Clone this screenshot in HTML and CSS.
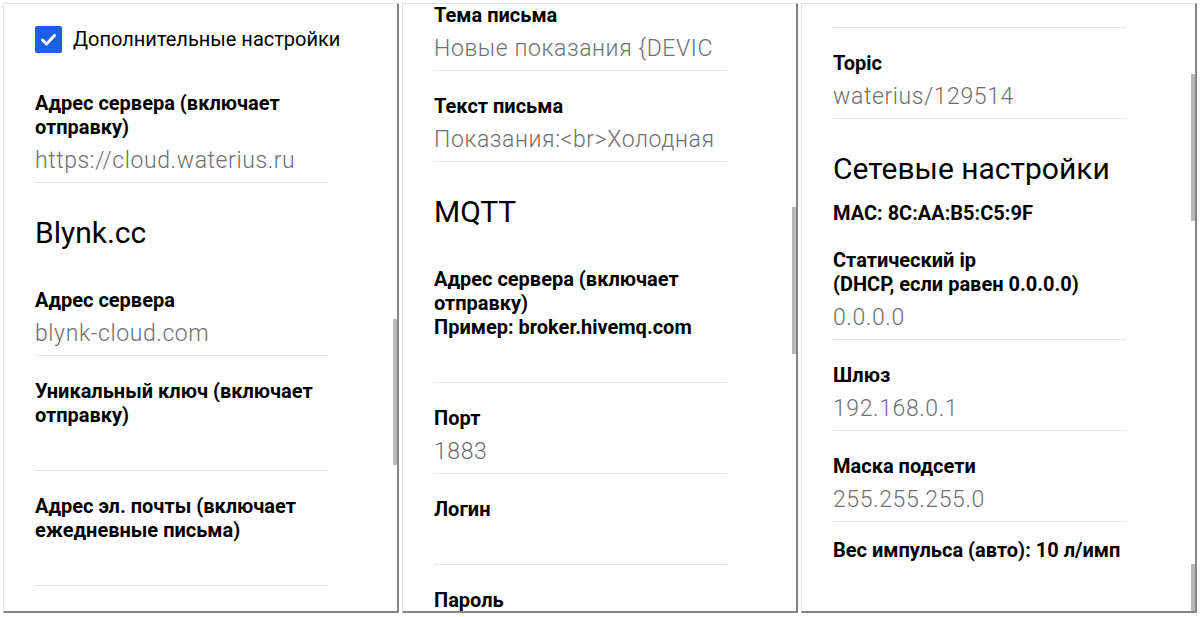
FILE: index.html
```html
<!DOCTYPE html>
<html lang="ru">
<head>
<meta charset="utf-8">
<title>Waterius</title>
<link rel="stylesheet" href="styles.css">
</head>
<body>
<div class="screens">
  <section class="panel">
    <div class="content">
      <label class="check-row">
        <span class="checkbox">
          <svg viewBox="0 0 27 27" width="27" height="27"><path d="M7.5 14 L11.5 18 L19.5 9.5" fill="none" stroke="#fff" stroke-width="3" stroke-linecap="round" stroke-linejoin="round"/></svg>
        </span>
        <span class="check-text">Дополнительные настройки</span>
      </label>
      <div class="field first">
        <div class="label">Адрес сервера (включает<br>отправку)</div>
        <div class="input">https://cloud.waterius.ru</div>
      </div>
      <h2 class="heading">Blynk.cc</h2>
      <div class="field">
        <div class="label">Адрес сервера</div>
        <div class="input">blynk-cloud.com</div>
      </div>
      <div class="field">
        <div class="label">Уникальный ключ (включает<br>отправку)</div>
        <div class="input"></div>
      </div>
      <div class="field">
        <div class="label">Адрес эл. почты (включает<br>ежедневные письма)</div>
        <div class="input"></div>
      </div>
    </div>
    <div class="thumb thumb-1"></div>
  </section>

  <section class="panel">
    <div class="content scrolled">
      <div class="field">
        <div class="label">Тема письма</div>
        <div class="input">Новые показания {DEVIC</div>
      </div>
      <div class="field">
        <div class="label">Текст письма</div>
        <div class="input">Показания:&lt;br&gt;Холодная</div>
      </div>
      <h2 class="heading">MQTT</h2>
      <div class="field">
        <div class="label">Адрес сервера (включает<br>отправку)<br>Пример: broker.hivemq.com</div>
        <div class="input"></div>
      </div>
      <div class="field">
        <div class="label">Порт</div>
        <div class="input">1883</div>
      </div>
      <div class="field">
        <div class="label">Логин</div>
        <div class="input"></div>
      </div>
      <div class="field">
        <div class="label">Пароль</div>
        <div class="input"></div>
      </div>
    </div>
    <div class="thumb thumb-2"></div>
  </section>

  <section class="panel">
    <div class="content">
      <div class="field stub">
        <div class="input stub-input"></div>
      </div>
      <div class="field">
        <div class="label">Topic</div>
        <div class="input">waterius/129514</div>
      </div>
      <h2 class="heading tight">Сетевые настройки</h2>
      <div class="info">MAC: 8C:AA:B5:C5:9F</div>
      <div class="field">
        <div class="label">Статический ip<br>(DHCP, если равен 0.0.0.0)</div>
        <div class="input">0.0.0.0</div>
      </div>
      <div class="field">
        <div class="label">Шлюз</div>
        <div class="input">192.168.0.1</div>
      </div>
      <div class="field">
        <div class="label">Маска подсети</div>
        <div class="input">255.255.255.0</div>
      </div>
      <div class="info last">Вес импульса (авто): 10 л/имп</div>
    </div>
    <div class="thumb thumb-3a"></div>
    <div class="thumb thumb-3b"></div>
  </section>
</div>
</body>
</html>
```

FILE: styles.css
```css
* { box-sizing: border-box; }

html, body {
  margin: 0;
  padding: 0;
  background: #ffffff;
}

body {
  font-family: Roboto, "Noto Sans", "Liberation Sans", sans-serif;
  color: #000;
}

.screens {
  display: flex;
  gap: 3px;
  padding: 3px;
}

.panel {
  position: relative;
  width: 396px;
  height: 610px;
  background: #fff;
  border-top: 1px solid #e2e2e2;
  border-left: 1px solid #e2e2e2;
  border-right: 2px solid #858585;
  border-bottom: 2px solid #858585;
  overflow: hidden;
}

.content {
  display: flex;
  flex-direction: column;
  padding: 0 0 0 31px;
}

.content.scrolled {
  margin-top: -1px;
}

.check-row {
  display: flex;
  align-items: center;
  gap: 11px;
  margin-top: 22px;
  height: 27px;
  margin-bottom: 38px;
}

.checkbox {
  width: 27px;
  height: 27px;
  border-radius: 2px;
  background: #1d5ee9;
  display: flex;
}

.check-text {
  font-size: 20px;
  line-height: 25px;
  font-weight: 400;
}

.field {
  width: 293px;
  display: flex;
  flex-direction: column;
  margin-bottom: 23px;
}

.label {
  font-size: 20px;
  line-height: 24px;
  font-weight: 700;
  white-space: nowrap;
}

.input {
  height: 44px;
  border-bottom: 1px solid #e6e6e6;
  font-size: 23px;
  letter-spacing: 0.6px;
  font-weight: 300;
  color: #707070;
  line-height: 44px;
  white-space: nowrap;
  overflow: hidden;
}

.stub-input {
  height: 24px;
}

.heading {
  margin: 7px 0 35px;
  font-size: 30px;
  line-height: 40px;
  font-weight: 400;
  white-space: nowrap;
}

.heading.tight {
  margin-bottom: 12px;
}

.info {
  font-size: 20px;
  line-height: 24px;
  font-weight: 700;
  margin-bottom: 23px;
  white-space: nowrap;
}

.info.last {
  margin-top: -7px;
}

.thumb {
  position: absolute;
  right: 0;
  width: 4px;
  background: #b9b9b9;
}

.thumb-1 { top: 315px; height: 146px; }
.thumb-2 { top: 203px; height: 147px; }
.thumb-3a { top: 70px; height: 147px; }
.thumb-3b { top: 560px; height: 60px; }
```
